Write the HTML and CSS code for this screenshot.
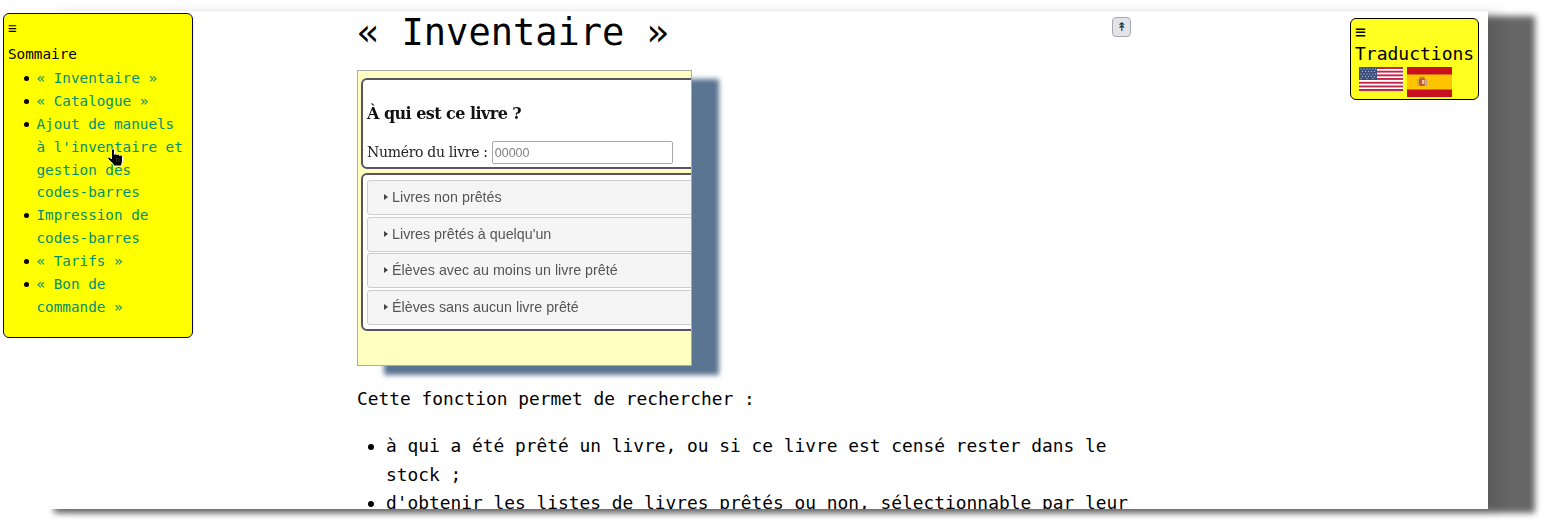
FILE: index.html
```html
<!DOCTYPE html>
<html lang="fr">
<head>
<meta charset="utf-8">
<title>Inventaire</title>
<link rel="stylesheet" href="styles.css">
</head>
<body>
<div class="sheet">
  <main class="main">
    <h1 class="title">«&nbsp;Inventaire&nbsp;»</h1>
    <figure class="shot">
      <div class="shot-inner">
        <section class="card card-form">
          <h3 class="card-title">À qui est ce livre ?</h3>
          <div class="form-line"><span>Numéro du livre :</span><span class="fake-input">00000</span></div>
        </section>
        <section class="card card-list">
          <div class="row"><i class="tri"></i>Livres non prêtés</div>
          <div class="row"><i class="tri"></i>Livres prêtés à quelqu'un</div>
          <div class="row"><i class="tri"></i>Élèves avec au moins un livre prêté</div>
          <div class="row"><i class="tri"></i>Élèves sans aucun livre prêté</div>
        </section>
      </div>
    </figure>
    <p class="intro">Cette fonction permet de rechercher :</p>
    <ul class="body-list">
      <li>à qui a été prêté un livre, ou si ce livre est censé rester dans le stock ;</li>
      <li>d'obtenir les listes de livres prêtés ou non, sélectionnable par leur</li>
    </ul>
  </main>
</div>

<nav class="toc">
  <div class="burger">≡</div>
  <div class="toc-title">Sommaire</div>
  <ul class="toc-list">
    <li><a>«&nbsp;Inventaire&nbsp;»</a></li>
    <li><a>«&nbsp;Catalogue&nbsp;»</a></li>
    <li><a>Ajout de manuels à l'inventaire et gestion des codes-barres</a></li>
    <li><a>Impression de codes-barres</a></li>
    <li><a>«&nbsp;Tarifs&nbsp;»</a></li>
    <li><a>«&nbsp;Bon de commande&nbsp;»</a></li>
  </ul>
</nav>

<svg class="hand" viewBox="0 0 18 20" width="18" height="20" aria-hidden="true">
  <path d="M4.500 2C4.500 .3 7.500 .3 7.500 2V6.500C8 5.500 10 5.500 10 6.800C10.500 6 12.500 6 12.500 7.500C13 6.800 15.500 7 15.500 8.500V13C15.500 15 14.500 16 14.500 18H7C6.500 16 4 14 1 11C0 9.800 1.500 8.500 3 9.500L4.500 11Z" fill="#000" stroke="#fff" stroke-width="1"/>
  <path d="M9.500 10V14M12 10V14" stroke="#555" stroke-width=".6" fill="none"/>
</svg>

<button class="top-btn" type="button">↟</button>

<aside class="lang">
  <div class="burger burger-lg">≡</div>
  <div class="lang-title">Traductions</div>
  <div class="flags">
    <svg class="flag-us" viewBox="0 0 44 24" width="44" height="24" aria-label="English">
      <rect width="44" height="24" fill="#fff"/>
      <g fill="#c3264a">
        <rect y="0" width="44" height="2"/><rect y="3.700" width="44" height="1.900"/><rect y="7.400" width="44" height="1.900"/><rect y="11" width="44" height="1.900"/><rect y="14.800" width="44" height="1.900"/><rect y="18.500" width="44" height="1.900"/><rect y="22" width="44" height="2"/>
      </g>
      <rect width="18" height="13" fill="#3c4f7d"/>
      <g fill="#c8d0e0">
        <circle cx="2" cy="2" r=".6"/><circle cx="5" cy="2" r=".6"/><circle cx="8" cy="2" r=".6"/><circle cx="11" cy="2" r=".6"/><circle cx="14" cy="2" r=".6"/><circle cx="16.500" cy="2" r=".6"/>
        <circle cx="3.500" cy="4.500" r=".6"/><circle cx="6.500" cy="4.500" r=".6"/><circle cx="9.500" cy="4.500" r=".6"/><circle cx="12.500" cy="4.500" r=".6"/><circle cx="15.500" cy="4.500" r=".6"/>
        <circle cx="2" cy="7" r=".6"/><circle cx="5" cy="7" r=".6"/><circle cx="8" cy="7" r=".6"/><circle cx="11" cy="7" r=".6"/><circle cx="14" cy="7" r=".6"/><circle cx="16.500" cy="7" r=".6"/>
        <circle cx="3.500" cy="9.500" r=".6"/><circle cx="6.500" cy="9.500" r=".6"/><circle cx="9.500" cy="9.500" r=".6"/><circle cx="12.500" cy="9.500" r=".6"/><circle cx="15.500" cy="9.500" r=".6"/>
        <circle cx="2" cy="11.500" r=".6"/><circle cx="8" cy="11.500" r=".6"/><circle cx="14" cy="11.500" r=".6"/>
      </g>
    </svg>
    <svg class="flag-es" viewBox="0 0 45 30" width="45" height="30" aria-label="Español">
      <rect width="45" height="30" fill="#c9101f"/>
      <rect y="7.500" width="45" height="15" fill="#ffc400"/>
      <rect x="10" y="12" width="1.500" height="6.500" fill="#b9a58a"/>
      <rect x="18.500" y="12" width="1.500" height="6.500" fill="#b9a58a"/>
      <rect x="12" y="11" width="6" height="8" rx="1.500" fill="#c0553a"/>
      <rect x="12.500" y="9.800" width="5" height="1.800" fill="#b08a30"/>
      <rect x="15" y="13" width="2.500" height="4" fill="#e8c8a0"/>
    </svg>
  </div>
</aside>
</body>
</html>
```
FILE: styles.css
```css
html, body {
  margin: 0;
  padding: 0;
  height: 528px;
  overflow: hidden;
  background: #fff;
}
body {
  position: relative;
  font-family: "DejaVu Sans Mono", monospace;
  color: #000;
  padding-top: 11px;
  padding-left: 48px;
  box-sizing: border-box;
  z-index: 0;
}
body::before {
  content: "";
  position: absolute;
  left: 54px;
  top: 16px;
  width: 1481px;
  height: 497px;
  background: #666;
  filter: blur(3px);
  z-index: -1;
}
.sheet {
  width: 1440px;
  height: 498px;
  background: #fff;
  overflow: hidden;
  box-shadow: 12px 1px 12px rgba(0, 0, 0, .1);
}
.main {
  width: 780px;
  margin-left: 309px;
  font-size: 17.880px;
  line-height: 28.800px;
}
.title {
  margin: 0;
  padding-top: 1px;
  font-size: 37px;
  font-weight: 400;
  line-height: 42px;
}
.shot {
  margin: 16px 0 0;
  width: 333px;
  height: 294px;
  border: 1px solid #aaa;
  background: #ffffc0;
  box-shadow: 27px 9px 5px #5a7592;
}
.shot-inner {
  width: 333px;
  height: 294px;
  padding: 7px 0 0 3px;
  box-sizing: border-box;
  overflow: hidden;
  filter: blur(.3px);
}
.card {
  width: 360px;
  box-sizing: border-box;
  background: #fff;
  border: 2px solid #555566;
  border-radius: 6px;
}
.card-form {
  height: 91px;
  padding: 0 4px;
  font-family: "DejaVu Serif", serif;
}
.card-title {
  margin: 22px 0 0;
  font-size: 16px;
  line-height: 24px;
  font-weight: 700;
  color: #111;
  letter-spacing: -.55px;
}
.form-line {
  margin-top: 14px;
  display: flex;
  align-items: center;
  gap: 4px;
  font-size: 14px;
  line-height: 24px;
  color: #222;
  letter-spacing: -.3px;
}
.fake-input {
  width: 181px;
  height: 23px;
  box-sizing: border-box;
  border: 1px solid #aaa;
  border-radius: 2px;
  padding-left: 2px;
  font: 12.500px/22px "Liberation Sans", sans-serif;
  letter-spacing: 0;
  color: #808080;
  background: #fff;
}
.card-list {
  margin-top: 4px;
  height: 158px;
  padding: 5px 4px;
}
.row {
  height: 35px;
  box-sizing: border-box;
  margin-bottom: 1.700px;
  display: flex;
  align-items: center;
  padding-left: 16px;
  padding-bottom: 1px;
  background: #f5f5f5;
  border: 1px solid #ccc;
  border-radius: 3px;
  font: 14.300px "Liberation Sans", sans-serif;
  color: #555;
}
.tri {
  width: 0;
  height: 0;
  margin-right: 4px;
  border-left: 4px solid #444;
  border-top: 3.500px solid transparent;
  border-bottom: 3.500px solid transparent;
}
.intro {
  margin: 19px 0 0;
}
.body-list {
  margin: 18px 0 0;
  padding-left: 29px;
}
.toc {
  position: absolute;
  left: 3px;
  top: 13px;
  width: 190px;
  height: 325px;
  box-sizing: border-box;
  padding: 3px 4px 0;
  background: #ff0;
  border: 1px solid #000080;
  border-radius: 6px;
  font-size: 14.300px;
  line-height: 22.900px;
}
.burger {
  font-size: 14.300px;
  line-height: 23px;
}
.burger-lg {
  font-size: 18px;
  line-height: 23px;
}
.toc-title {
  margin-top: 3px;
}
.toc-list {
  margin: 1px 0 0;
  padding-left: 28.500px;
  list-style: none;
}
.toc-list li {
  position: relative;
}
.toc-list li::before {
  content: "";
  position: absolute;
  left: -13px;
  top: 9px;
  width: 5px;
  height: 5px;
  border-radius: 50%;
  background: #000;
}
.toc-list a {
  color: #008f70;
}
.hand {
  position: absolute;
  left: 107px;
  top: 148px;
}
.top-btn {
  position: absolute;
  left: 1112px;
  top: 17px;
  width: 19px;
  height: 20px;
  padding: 0;
  background: #e4e4e8;
  border: 1px solid #a8a8b4;
  border-radius: 4px;
  font: 12px/18px "DejaVu Sans", sans-serif;
  color: #222;
}
.lang {
  position: absolute;
  left: 1350px;
  top: 18px;
  width: 129px;
  height: 82px;
  box-sizing: border-box;
  padding: 1px 4px 0;
  background: #ffff20;
  border: 1px solid #000;
  border-radius: 6px;
}
.lang-title {
  font-size: 18px;
  line-height: 22px;
}
.flags {
  display: flex;
  align-items: flex-start;
  gap: 4px;
  margin-top: 2px;
  padding-left: 4px;
}
```
